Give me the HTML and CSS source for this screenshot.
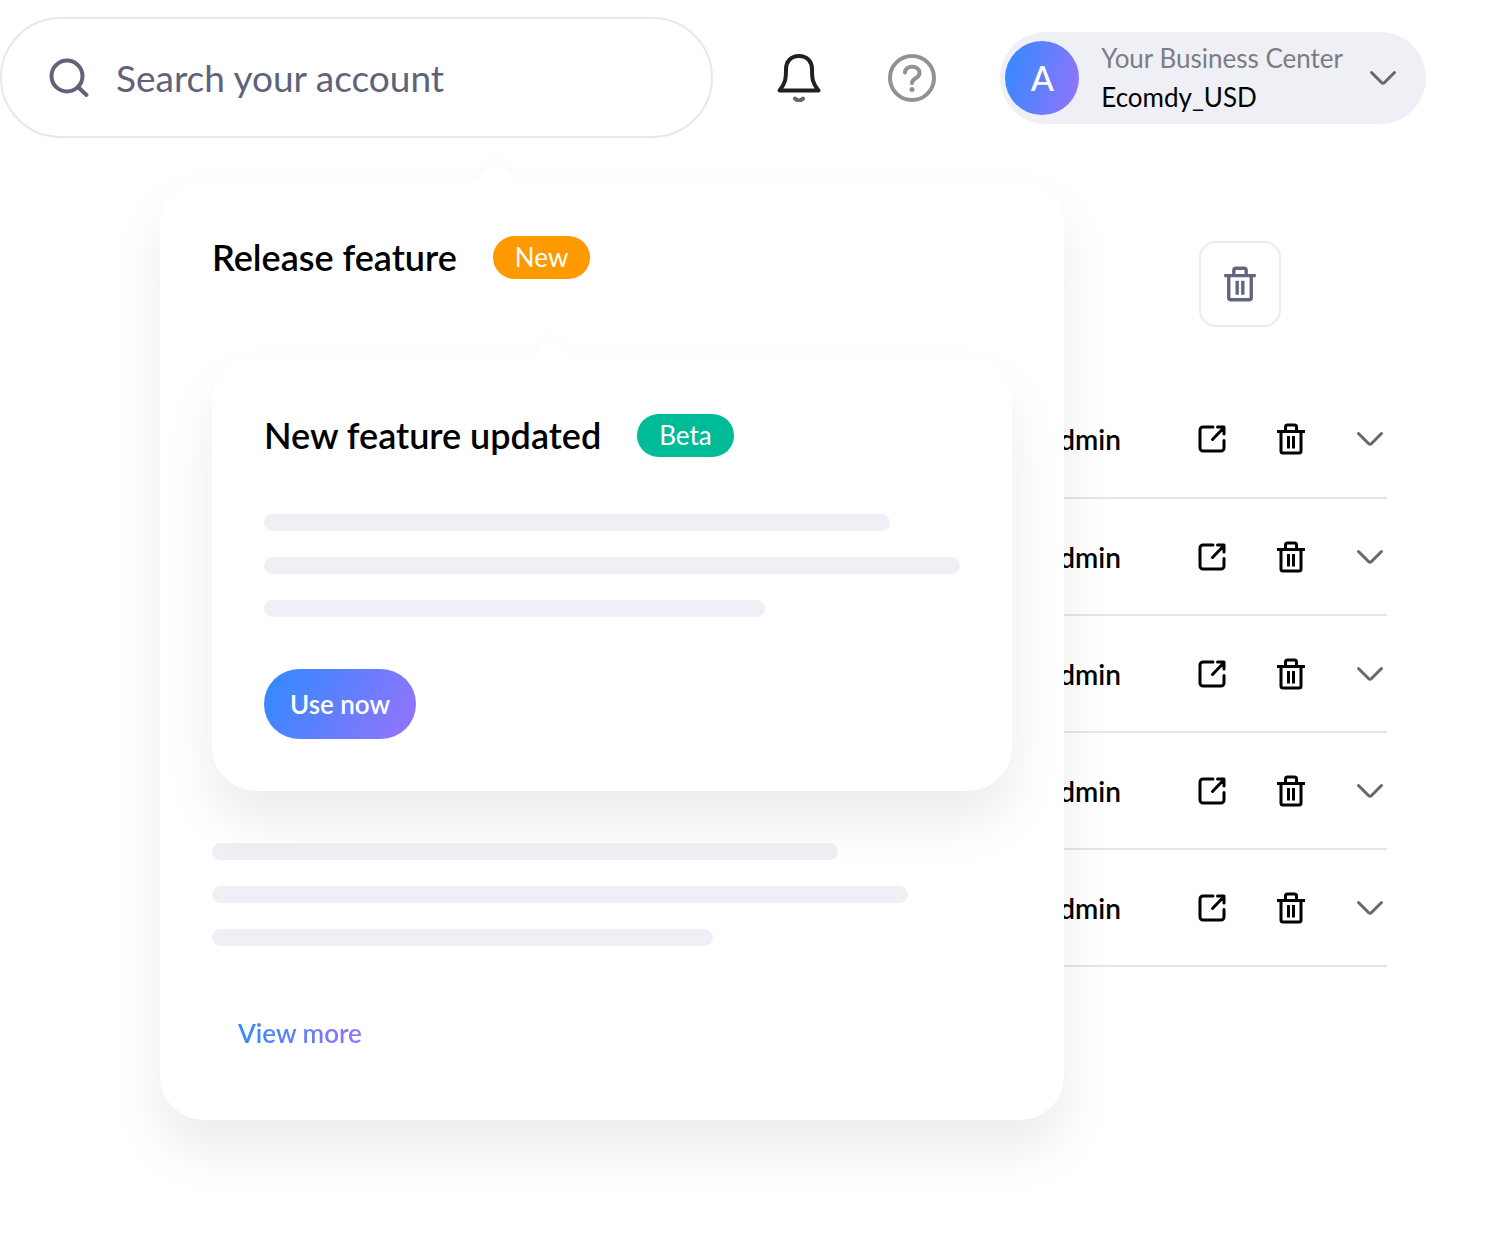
FILE: index.html
```html
<!DOCTYPE html>
<html lang="en">
<head>
    <meta charset="UTF-8">
    <meta name="viewport" content="width=device-width, initial-scale=1.0">
    <title>Your Business Center</title>
    <link rel="stylesheet" href="styles.css">
</head>
<body>

    <svg class="sprite" aria-hidden="true">
        <symbol id="trash" viewBox="0 0 32 32">
            <path stroke-linecap="butt" d="M2 8.500h28M10.500 8V4a2 2 0 0 1 2-2h7a2 2 0 0 1 2 2v4M6 9v19a2 2 0 0 0 2 2h16a2 2 0 0 0 2-2V9M13.500 13v12.500M18.500 13v12.500"/>
        </symbol>
        <symbol id="open" viewBox="0 0 32 32">
            <path d="M17 4H7a3 3 0 0 0-3 3v18a3 3 0 0 0 3 3h18a3 3 0 0 0 3-3V17.500M16.500 16.500 28 4.500M21.500 4H28v7"/>
        </symbol>
        <symbol id="chevron" viewBox="0 0 32 32">
            <path d="M4.500 10.500 14.500 20.500q1.500 1.500 3 0L27.500 10.500"/>
        </symbol>
    </svg>

    <header class="header">
        <label class="search">
            <svg class="search-icon" viewBox="0 0 42 42" aria-hidden="true">
                <circle cx="19" cy="19" r="15.500"/>
                <path d="M30.500 30.500 38.500 38"/>
            </svg>
            <input type="search" placeholder="Search your account" aria-label="Search your account">
        </label>

        <nav class="header-icons">
            <button class="icon-btn bell" aria-label="Notifications">
                <svg viewBox="0 0 48 48">
                    <path d="M24 2C15.500 2 11 8 11 15c0 10-.5 14-6.500 21.500h39C37.500 29 37 25 37 15 37 8 32.500 2 24 2z"/>
                    <path class="clapper" d="M20 44.500q4 4 8 0"/>
                </svg>
            </button>
            <button class="icon-btn help" aria-label="Help">
                <svg viewBox="0 0 48 48">
                    <circle cx="24" cy="24" r="22"/>
                    <path d="M17 18.500C17 10.500 31.500 11 31.500 19c0 5.500-7.500 5-7.500 10"/>
                    <circle class="dot" cx="24" cy="35.500" r="2.500"/>
                </svg>
            </button>
        </nav>

        <button class="account">
            <span class="avatar">A</span>
            <span class="account-text">
                <span class="account-label">Your Business Center</span>
                <span class="account-name">Ecomdy_USD</span>
            </span>
            <svg class="icon chevron"><use href="#chevron"/></svg>
        </button>
    </header>

    <main class="content">
        <section class="list">
            <div class="toolbar">
                <button class="delete-btn" aria-label="Delete selected"><svg class="icon"><use href="#trash"/></svg></button>
            </div>
            <table class="users">
                <tbody id="userRows"></tbody>
            </table>
        </section>

        <section class="popover panel">
            <div class="title-row">
                <h2>Release feature</h2>
                <span class="badge badge-new">New</span>
            </div>

            <article class="popover card">
                <div class="title-row">
                    <h2>New feature updated</h2>
                    <span class="badge badge-beta">Beta</span>
                </div>
                <div class="lines">
                    <div class="line medium"></div>
                    <div class="line"></div>
                    <div class="line short"></div>
                </div>
                <button class="btn btn-primary">Use now</button>
            </article>

            <div class="lines">
                <div class="line medium"></div>
                <div class="line"></div>
                <div class="line short"></div>
            </div>
            <a class="btn btn-link" href="#"><span>View more</span></a>
        </section>
    </main>

    <script>
        let users = ["Admin", "Admin", "Admin", "Admin", "Admin"];
        let userRows = document.getElementById("userRows");

        users.forEach(role => {
            let row = document.createElement("tr");
            row.innerHTML = `
                <td class="role">${role}</td>
                <td class="actions">
                    <div class="action-list">
                        <button class="icon-btn" aria-label="Open"><svg class="icon"><use href="#open"/></svg></button>
                        <button class="icon-btn" aria-label="Delete"><svg class="icon"><use href="#trash"/></svg></button>
                        <button class="icon-btn" aria-label="Expand"><svg class="icon chevron"><use href="#chevron"/></svg></button>
                    </div>
                </td>`;
            userRows.appendChild(row);
        });
    </script>

</body>
</html>
```

FILE: styles.css
```css
* {
    box-sizing: border-box;
}
body {
    margin: 0;
    background: #fff;
    color: #000;
    font-family: Lato, "Liberation Sans", sans-serif;
    font-size: 26px;
}
button {
    font-family: inherit;
    padding: 0;
    border: 0;
    background: none;
    color: inherit;
    cursor: pointer;
}
svg {
    display: block;
    fill: none;
    stroke: currentColor;
    stroke-width: 3;
    stroke-linecap: round;
    stroke-linejoin: round;
}
.sprite {
    position: absolute;
    width: 0;
    height: 0;
}
.icon {
    width: 32px;
    height: 32px;
}
.chevron {
    color: #66686f;
}

/* Header */
.header {
    display: flex;
    align-items: center;
    padding: 17px 74px 0 0;
}
.search {
    flex: 1;
    display: flex;
    align-items: center;
    gap: 26px;
    height: 121px;
    padding: 0 46px;
    border: 2px solid #e8e8ec;
    border-radius: 61px;
    color: #5f627a;
}
.search-icon {
    width: 42px;
    height: 42px;
    stroke-width: 4;
}
.search input {
    flex: 1;
    min-width: 0;
    padding: 0;
    border: 0;
    outline: none;
    background: none;
    color: inherit;
    font-family: inherit;
    font-size: 37px;
}
.search input::placeholder {
    color: inherit;
    opacity: 1;
}
.header-icons {
    display: flex;
    gap: 65px;
    margin: 0 64px 0 62px;
}
.header-icons svg {
    width: 48px;
    height: 48px;
    stroke-width: 4;
}
.bell {
    color: #202020;
}
.bell .clapper {
    stroke: #666;
}
.help {
    color: #929292;
}
.help .dot {
    fill: currentColor;
    stroke: none;
}
.account {
    display: flex;
    align-items: center;
    height: 92px;
    padding: 0 27px 0 5px;
    border-radius: 46px;
    background: #eff0f6;
    text-align: left;
}
.avatar {
    width: 74px;
    height: 74px;
    margin-right: 22px;
    border-radius: 50%;
    background: linear-gradient(105deg, #2e8bff, #9772fb);
    color: #fff;
    font-size: 34px;
    font-weight: 500;
    line-height: 74px;
    text-align: center;
}
.account-text {
    display: flex;
    flex-direction: column;
    margin-right: 24px;
    font-size: 26px;
    line-height: 39px;
}
.account-label {
    color: #7c7d82;
}
.account-name {
    color: #000;
}

/* The popover is stacked over the user list in the same grid cell */
.content {
    display: grid;
    align-items: start;
    padding: 42px 113px 117px 160px;
}
.list,
.panel {
    grid-area: 1 / 1;
}

/* User list */
.list {
    padding-top: 61px;
}
.toolbar {
    display: flex;
    justify-content: flex-end;
    padding-right: 106px;
    margin-bottom: 54px;
}
.delete-btn {
    display: flex;
    align-items: center;
    justify-content: center;
    width: 82px;
    height: 86px;
    border: 2px solid #ececef;
    border-radius: 17px;
    color: #62657f;
}
.delete-btn .icon {
    width: 36px;
    height: 36px;
}
.users {
    width: 100%;
    border-collapse: collapse;
}
.users td {
    height: 117px;
    padding: 0;
    border-bottom: 2px solid #e6e6e9;
}
.users .role {
    font-size: 28px;
    font-weight: 600;
    text-align: right;
}
.users .actions {
    width: 266px;
}
.action-list {
    display: flex;
    justify-content: flex-end;
    gap: 47px;
    padding-right: 1px;
}

/* Popovers */
.popover {
    position: relative;
    background: #fff;
    border-radius: 44px;
    box-shadow: 0 30px 52px rgba(0, 0, 0, 0.08);
}
.popover::before {
    content: "";
    position: absolute;
    top: -15px;
    left: 322px;
    width: 30px;
    height: 30px;
    background: #fff;
    box-shadow: -4px -4px 10px rgba(0, 0, 0, 0.02);
    transform: rotate(45deg);
}
.panel {
    margin-right: 323px;
    padding: 56px 52px 52px;
}
.card {
    margin-top: 79px;
    padding: 56px 52px 52px;
}
.title-row {
    display: flex;
    align-items: center;
    gap: 36px;
}
.title-row h2 {
    margin: 0;
    font-size: 36px;
    font-weight: 600;
    line-height: 43px;
}
.badge {
    padding: 0 22px;
    border-radius: 22px;
    color: #fff;
    font-size: 26px;
    line-height: 43px;
}
.badge-new {
    background: #ff9900;
}
.badge-beta {
    background: #00bb98;
}
.lines {
    display: flex;
    flex-direction: column;
    gap: 26px;
    max-width: 696px;
    margin: 52px 0;
}
.card .lines {
    margin-top: 57px;
}
.line {
    height: 17px;
    border-radius: 9px;
    background: #eff0f6;
}
.line.medium {
    width: 90%;
}
.line.short {
    width: 72%;
}
.btn {
    display: block;
    width: fit-content;
    padding: 0 26px;
    border-radius: 35px;
    font-size: 26px;
    font-weight: 600;
    line-height: 70px;
    text-decoration: none;
}
.btn-primary {
    background: linear-gradient(120deg, #2e8bff, #9772fb);
    color: #fff;
}
.btn-link span {
    background: linear-gradient(105deg, #2e8bff, #9772fb);
    background-clip: text;
    color: transparent;
}
```
